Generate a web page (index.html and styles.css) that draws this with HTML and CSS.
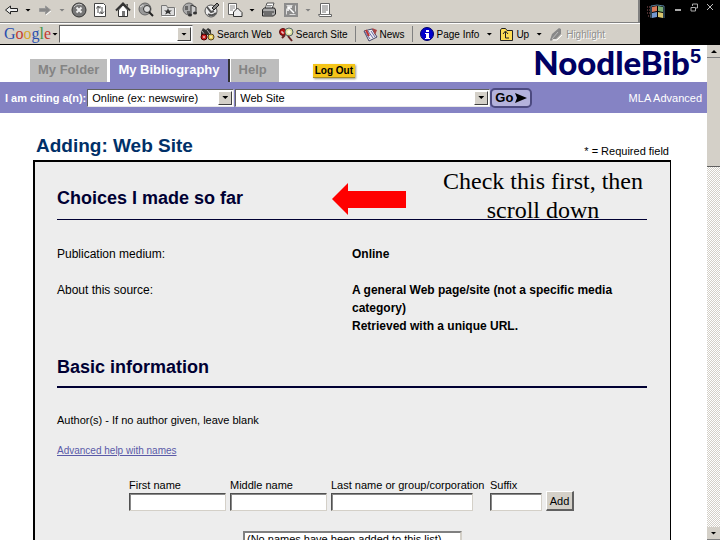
FILE: index.html
```html
<!DOCTYPE html>
<html lang="en">
<head>
    <meta charset="UTF-8">
    <meta name="viewport" content="width=device-width, initial-scale=1.0">
    <title>NoodleBib - Adding: Web Site</title>
    <link rel="stylesheet" href="styles.css">
</head>
<body>

<!-- Browser toolbars -->
<div class="browser">
    <div class="bars">
        <div class="toolbar">
            <button class="tool" aria-label="Back"><svg width="16" height="16" viewBox="0 0 16 16"><path d="M2.500 8l5-4v2.500h7v3h-7V12z" fill="#eee" stroke="#222"/></svg></button>
            <button class="caret" aria-label="Back history"></button>
            <button class="tool" aria-label="Forward"><svg width="16" height="16" viewBox="0 0 16 16"><path d="M13.500 8l-5-4v2.500h-6v3h6V12z" fill="#888" stroke="#999"/><path d="M9 13l5-4" stroke="#fff"/></svg></button>
            <button class="caret light" aria-label="Forward history"></button>
            <button class="tool" aria-label="Stop"><svg width="16" height="16" viewBox="0 0 16 16"><circle cx="8" cy="8" r="7" fill="#777" stroke="#333"/><path d="M3 5a6 6 0 0 1 8-2" stroke="#ccc" fill="none"/><path d="M5.500 5.500l5 5M10.500 5.500l-5 5" stroke="#eee" stroke-width="2"/></svg></button>
            <button class="tool" aria-label="Refresh"><svg width="16" height="16" viewBox="0 0 16 16"><path d="M1.500 1.500h9l2 2v11h-11z" fill="#fff" stroke="#444"/><path d="M5 11V5h3M3.500 6.500L5 4l2 2.500M9 5v6H6M7.500 9.500L9 12l2-2.500" fill="none" stroke="#555"/></svg></button>
            <button class="tool" aria-label="Home"><svg width="16" height="16" viewBox="0 0 16 16"><path d="M3.500 8v6.500h9V8L8 3z" fill="#fff" stroke="#333"/><path d="M1 8.500L8 1.500l7 7" fill="none" stroke="#333" stroke-width="2"/><path d="M11 2h2v4z" fill="#555"/><path d="M7 9h3v5H7z" fill="#777"/></svg></button>
            <span class="sep"></span>
            <button class="tool" aria-label="Search"><svg width="16" height="16" viewBox="0 0 16 16"><circle cx="7" cy="7" r="6" fill="#999" stroke="#666"/><path d="M2 5q3-3 5 0t5 0" stroke="#ddd" fill="none"/><circle cx="9" cy="7" r="3.500" fill="#ddd" stroke="#333"/><path d="M11 10l4 4" stroke="#222" stroke-width="2"/></svg></button>
            <button class="tool" aria-label="Favorites"><svg width="16" height="16" viewBox="0 0 16 16"><path d="M1.500 13.500v-10h5l1 2h7v8z" fill="#ddd" stroke="#777"/><path d="M8 6l1 2.500h3L9.800 10l1 2.500L8 11l-2.800 1.500 1-2.500L4 8.500h3z" fill="#333"/><path d="M2 14.500h13.500V6" fill="none" stroke="#fff"/></svg></button>
            <button class="tool" aria-label="Media"><svg width="16" height="16" viewBox="0 0 16 16"><circle cx="7" cy="7" r="6" fill="#aaa" stroke="#666"/><path d="M3 4h3v4H3zM5 9h3v3H5z" fill="#666"/><path d="M9 13V3l5 2v6" fill="#ccc" stroke="#333"/><ellipse cx="8" cy="13" rx="2" ry="1.500" fill="#333"/><ellipse cx="13" cy="11" rx="2" ry="1.500" fill="#333"/></svg></button>
            <button class="tool" aria-label="History"><svg width="16" height="16" viewBox="0 0 16 16"><circle cx="7" cy="9" r="6" fill="#eee" stroke="#555"/><path d="M3 5l4 5 3-1M4 12q4 3 8-1" fill="none" stroke="#555" stroke-width="2"/><path d="M8 6l5-5 2 2-5 5z" fill="#888" stroke="#222"/></svg></button>
            <span class="sep"></span>
            <button class="tool" aria-label="Edit"><svg width="16" height="16" viewBox="0 0 16 16"><path d="M1.500 1.500h8v11h-8z" fill="#fff" stroke="#666"/><path d="M3 4h5M3 6h5M3 8h3" stroke="#888"/><path d="M6.500 10l4-4 4.500 4.500v4H6.500z" fill="#eee" stroke="#333"/></svg></button>
            <button class="caret" aria-label="Edit options"></button>
            <button class="tool" aria-label="Print"><svg width="16" height="16" viewBox="0 0 16 16"><path d="M4 7l2-6h7l-2 6z" fill="#fff" stroke="#555"/><path d="M1.500 7.500l2-1.500h10l1 2v4l-2 2h-11z" fill="#aaa" stroke="#222"/><path d="M2 10h11M3 12h8" stroke="#333"/><path d="M6 3.500h5M6 5h4" stroke="#888"/></svg></button>
            <button class="tool" aria-label="Full screen"><svg width="16" height="16" viewBox="0 0 16 16"><path d="M1 1h14v14H1z" fill="#8c8c8c"/><path d="M3.500 12.500v-9h9v9z" fill="none" stroke="#ddd" stroke-dasharray="6 3"/><path d="M5 9V5h4M5 5l6 6" fill="none" stroke="#fff" stroke-width="1.500"/></svg></button>
            <button class="caret light" aria-label="Screen options"></button>
            <button class="tool" aria-label="Discuss"><svg width="16" height="16" viewBox="0 0 16 16"><path d="M3.500 1.500h9v11h2v2h-12l-1-2h2z" fill="#fff" stroke="#666"/><path d="M5 4h6M5 6h6M5 8h6M5 10h4M4 12.500h9" stroke="#777"/></svg></button>
        </div>
        <div class="google-bar">
            <span class="google"><span class="g-blue">G</span><span class="g-red">o</span><span class="g-yellow">o</span><span class="g-blue">g</span><span class="g-green">l</span><span class="g-red">e</span></span>
            <button class="caret" aria-label="Google menu"></button>
            <div class="combo search-box">
                <input type="text" aria-label="Search terms">
                <button class="drop" aria-label="Recent searches"></button>
            </div>
            <button class="bar-item"><svg width="15" height="15" viewBox="0 0 15 15"><path d="M1 5l2-4 3 2 2-2 3 2v5H1z" fill="#333"/><path d="M2 4l3 4M7 3l3 4" stroke="#bbb"/><circle cx="4" cy="10" r="3" fill="#c22" stroke="#400"/><circle cx="11" cy="10" r="3" fill="#e8ce58" stroke="#542"/><path d="M3 10h2M10 10h2" stroke="#fff"/></svg>Search Web</button>
            <button class="bar-item"><svg width="15" height="15" viewBox="0 0 15 15"><circle cx="4" cy="5" r="3.500" fill="#b11" stroke="#511"/><circle cx="10" cy="5" r="4" fill="#dfe0a0" stroke="#566"/><path d="M3 4v2h2M8 5h4M10 3v4" stroke="#fff" fill="none"/><path d="M6 8l-3 3M9 9l4 5" stroke="#622" stroke-width="2"/></svg>Search Site</button>
            <span class="sep"></span>
            <button class="bar-item"><svg width="15" height="15" viewBox="0 0 15 15"><path d="M1 4l8-2 5 8-8 4z" fill="#eee" stroke="#446"/><path d="M2 5l5 7M5 4l5 7M8 4l4 6" stroke="#66a"/><path d="M9 1l5 2-2 5z" fill="#a44"/><path d="M3 3l3 6" stroke="#b33" stroke-width="2"/></svg>News</button>
            <span class="sep"></span>
            <button class="bar-item"><svg width="15" height="15" viewBox="0 0 15 15"><circle cx="7" cy="7" r="6.500" fill="#00c" stroke="#006"/><path d="M6 3h3v2H6zM5 6h4v5h1v1H5v-1h1V7H5z" fill="#fff"/></svg>Page Info</button>
            <button class="caret" aria-label="Page info options"></button>
            <button class="bar-item"><svg width="15" height="15" viewBox="0 0 15 15"><path d="M1.500 13.500V3l1-1.500h4L8 3.500h5.500v10z" fill="#fd5" stroke="#222"/><path d="M4 7l2.500-3L9 7M6.500 5v6H10" fill="none" stroke="#222"/></svg>Up</button>
            <button class="caret" aria-label="Up options"></button>
            <button class="bar-item off"><svg width="15" height="15" viewBox="0 0 15 15"><path d="M1 13l2-6 7-6 2 1v5l-5 5H4l-2 2z" fill="#888"/><path d="M3 12l6-7" stroke="#bbb"/><path d="M4 13h4l5-5" stroke="#fff" fill="none"/></svg>Highlight</button>
        </div>
    </div>
    <div class="window-corner">
        <svg class="flag" width="20" height="18" viewBox="0 0 20 18"><path d="M6 4l5-1v5L6 9z" fill="#d97856"/><path d="M12 3l5 1v5l-5-1z" fill="#7cae72"/><path d="M6 10l5-1v5l-5 1z" fill="#7398d0"/><path d="M12 9l5 1v5l-5-1z" fill="#d8c46e"/><path d="M1 4h4M1 7h4M1 10h4M2 13h3" stroke="#935a5a" stroke-dasharray="1 1"/><path d="M5 15V3l6-1 7 1v12" fill="none" stroke="#577f99"/></svg>
        <button aria-label="Minimize"><svg width="8" height="9" viewBox="0 0 8 9"><path d="M1 7h6" stroke="#aaa" stroke-width="2"/></svg></button>
        <button aria-label="Restore"><svg width="8" height="9" viewBox="0 0 8 9"><path d="M2.500 3V1h5v4H6M1 4.500h4.500v3.500H1z" fill="none" stroke="#aaa"/></svg></button>
        <button aria-label="Close"><svg width="8" height="9" viewBox="0 0 8 9"><path d="M1 1l6 6M7 1L1 7" stroke="#bbb"/></svg></button>
    </div>
</div>

<div class="viewport">
    <main class="page">
        <!-- Tabs and logo -->
        <header class="header">
            <nav class="tabs">
                <a href="#" class="tab">My Folder</a>
                <a href="#" class="tab active">My Bibliography</a>
                <a href="#" class="tab">Help</a>
            </nav>
            <button class="logout">Log Out</button>
            <div class="logo">NoodleBib<span class="version">5</span></div>
        </header>

        <!-- Citation type -->
        <form class="cite-bar">
            <label for="medium">I am citing a(n):</label>
            <div class="combo medium">
                <select id="medium"><option>Online (ex: newswire)</option></select>
                <span class="drop"></span>
            </div>
            <div class="combo source">
                <select id="source" aria-label="Source type"><option>Web Site</option></select>
                <span class="drop"></span>
            </div>
            <button type="button" class="go">Go<svg width="12" height="10" viewBox="0 0 12 10"><path d="M0 0l12 5-12 5 2-5z" fill="#000"/></svg></button>
            <a href="#" class="style-link">MLA Advanced</a>
        </form>

        <div class="title-row">
            <h1>Adding: Web Site</h1>
            <span>* = Required field</span>
        </div>

        <section class="panel">
            <h2>Choices I made so far</h2>
            <dl class="choices">
                <dt>Publication medium:</dt>
                <dd>Online</dd>
                <dt>About this source:</dt>
                <dd>A general Web page/site (not a specific media category)<br>Retrieved with a unique URL.</dd>
            </dl>

            <h2 class="thick">Basic information</h2>
            <p>Author(s) - If no author given, leave blank</p>
            <p><a href="#" class="help">Advanced help with names</a></p>

            <form class="names">
                <div class="field"><label for="first">First name</label><input type="text" id="first"></div>
                <div class="field"><label for="middle">Middle name</label><input type="text" id="middle"></div>
                <div class="field last"><label for="last">Last name or group/corporation</label><input type="text" id="last"></div>
                <div class="field suffix"><label for="suffix">Suffix</label><input type="text" id="suffix"></div>
                <button type="button" class="add">Add</button>
            </form>
            <select class="name-list" size="4" aria-label="Names">
                <option>(No names have been added to this list)</option>
            </select>

            <!-- Note over the form -->
            <div class="note">
                <svg width="74" height="32" viewBox="0 0 74 32"><path d="M0 16L16 0v8h58v17H16v7z" fill="#f00"/></svg>
                <p>Check this first, then scroll down</p>
            </div>
        </section>
    </main>

    <div class="scrollbar">
        <button class="scroll-up" aria-label="Scroll up"></button>
        <div class="thumb"></div>
        <button class="scroll-down" aria-label="Scroll down"></button>
    </div>
</div>

</body>
</html>
```
FILE: styles.css
```css
* {
    box-sizing: border-box;
}

body {
    font-family: "Liberation Sans", Arial, sans-serif;
    font-size: 11px;
    margin: 0;
    height: 100vh;
    display: flex;
    flex-direction: column;
    overflow: hidden;
    background-color: #fff;
    color: #000;
}

button, input, select {
    font-family: inherit;
    font-size: inherit;
    color: inherit;
    margin: 0;
    padding: 0;
    border: none;
    border-radius: 0;
    background: none;
}

svg {
    display: block;
    flex: none;
}

/* Browser toolbars */
.browser {
    display: flex;
    flex: none;
}

.bars {
    flex: 1;
    background-color: #d4d0c8;
    border-bottom: 1px solid #000;
}

.toolbar {
    display: flex;
    align-items: center;
    gap: 6px;
    height: 23px;
    padding: 0 3px 2px;
    border-right: 2px solid #808080;
    border-bottom: 1px solid #808080;
}

.google-bar {
    display: flex;
    align-items: center;
    gap: 7px;
    height: 21px;
    padding-left: 4px;
    border-top: 1px solid #fff;
    font-size: 10px;
}

.caret {
    width: 6px;
    height: 3px;
    background-color: #000;
    clip-path: polygon(0 0, 100% 0, 50% 100%);
}

.caret.light {
    background-color: #808080;
}

.sep {
    width: 1px;
    height: 16px;
    background-color: #808080;
}

.toolbar .sep {
    margin: 0 -3px;
    background-color: #fff;
}

.google {
    width: 35px;
    white-space: nowrap;
    font-family: "Liberation Serif", serif;
    font-size: 16px;
    line-height: 18px;
}

.google + .caret {
    margin: 0 -6px 0 6px;
}

.g-blue { color: #2a4fae; }
.g-red { color: #c2392f; }
.g-yellow { color: #d8a52c; }
.g-green { color: #3f9446; }

.bar-item {
    display: flex;
    align-items: center;
    gap: 2px;
    white-space: nowrap;
}

.bar-item.off {
    color: #909090;
    text-shadow: 1px 1px #fff;
}

.window-corner {
    display: flex;
    align-items: flex-start;
    gap: 8px;
    width: 80px;
    padding: 3px 6px;
    background-color: #000;
}

/* Boxes with a drop arrow */
.combo {
    display: flex;
    height: 18px;
    padding: 1px;
    background-color: #fff;
    border: 1px solid #606060;
    border-right-color: #e8e8e8;
    border-bottom-color: #e8e8e8;
}

.combo input,
.combo select {
    flex: 1;
    min-width: 0;
    appearance: none;
    padding-left: 3px;
    outline: none;
}

.drop {
    width: 14px;
    background-color: #d4d0c8;
    border: 1px solid #fff;
    border-right-color: #404040;
    border-bottom-color: #404040;
    display: flex;
    align-items: center;
    justify-content: center;
}

.drop::after,
.scroll-up::after,
.scroll-down::after {
    content: "";
    width: 6px;
    height: 3px;
    background-color: #000;
    clip-path: polygon(0 0, 100% 0, 50% 100%);
}

.search-box {
    width: 134px;
}

/* Page */
.viewport {
    flex: 1;
    min-height: 0;
    display: flex;
}

.page {
    flex: 1;
    min-width: 0;
    overflow: hidden;
}

.header {
    display: flex;
    align-items: flex-end;
    height: 37px;
    padding-left: 30px;
}

.tabs {
    display: flex;
    gap: 3px;
}

.tab {
    height: 23px;
    padding: 0 8px;
    background-color: #bdbdbd;
    color: #848484;
    font-size: 13px;
    font-weight: bold;
    line-height: 22px;
    text-decoration: none;
}

.tab.active {
    background-color: #8583c4;
    color: #fff;
    box-shadow: 2px 0 #333;
}

.tab:last-child {
    padding-right: 12px;
}

.logout {
    margin: 0 0 4px 34px;
    height: 14px;
    padding: 0 2px;
    background-color: #f5c518;
    border-bottom: 1px solid #a88a20;
    box-shadow: 1px 1px 2px #998;
    font-size: 10px;
    font-weight: bold;
    line-height: 13px;
}

.logo {
    display: flex;
    align-items: flex-start;
    align-self: flex-start;
    margin-left: auto;
    padding-right: 6px;
    color: #000063;
    font-family: Lato, "Liberation Sans", sans-serif;
    font-size: 33px;
    font-weight: 900;
    line-height: 34px;
}

.logo .version {
    font-family: "Liberation Sans", sans-serif;
    font-size: 20px;
    font-weight: bold;
    line-height: 22px;
}

.cite-bar {
    display: flex;
    align-items: center;
    height: 31px;
    padding: 0 5px;
    background-color: #8583c4;
}

.cite-bar label {
    margin-right: 1px;
    color: #fff;
    font-weight: bold;
}

.medium {
    width: 147px;
    margin-right: 1px;
}

.source {
    width: 255px;
}

.go {
    display: flex;
    align-items: center;
    gap: 2px;
    height: 20px;
    padding: 0 3px;
    background-color: #b4b2dc;
    border: 2px solid #4c4a80;
    border-radius: 5px;
    font-size: 13px;
    font-weight: bold;
}

.style-link {
    margin-left: auto;
    color: #fff;
    text-decoration: none;
}

.title-row {
    display: flex;
    align-items: flex-end;
    justify-content: space-between;
    height: 47px;
    padding: 0 38px 3px 36px;
}

.title-row h1 {
    margin: 0;
    color: #003068;
    font-size: 19px;
    font-weight: bold;
    line-height: 22px;
}

.panel {
    position: relative;
    margin: 0 36px 0 33px;
    padding: 26px 23px 0 22px;
    height: 500px;
    background-color: #ededed;
    border: 2px solid #000;
    border-right-width: 1px;
}

.panel h2 {
    margin: 0 0 25px;
    padding-bottom: 10px;
    border-bottom: 1px solid #000033;
    color: #000033;
    font-size: 18px;
    line-height: 21px;
}

.panel h2.thick {
    margin: 22px 0 23px;
    padding-bottom: 8px;
    border-bottom-width: 2px;
}

.choices {
    display: grid;
    grid-template-columns: 1fr 1fr;
    row-gap: 18px;
    margin: 0;
    font-size: 12px;
    line-height: 18px;
}

.choices dd {
    margin: 0;
    font-weight: bold;
}

.panel p {
    margin: 0 0 12px;
    line-height: 18px;
}

.help {
    color: #5a5aa8;
    font-size: 10px;
}

/* Author name fields */
.names {
    display: flex;
    align-items: flex-end;
    gap: 4px;
    margin: 18px 0 20px 72px;
}

.field {
    display: flex;
    flex-direction: column;
    width: 97px;
    white-space: nowrap;
    line-height: 15px;
}

.field input {
    height: 18px;
    background-color: #fff;
    border: 1px solid #505050;
    border-right-color: #d4d0c8;
    border-bottom-color: #d4d0c8;
    box-shadow: inset 1px 1px #888;
}

.field.last {
    width: 155px;
}

.field.last input {
    width: 142px;
}

.field.suffix {
    width: 52px;
}

.add {
    height: 20px;
    width: 28px;
    background-color: #d4d0c8;
    border: 1px solid #fff;
    border-right: 2px solid #606060;
    border-bottom: 2px solid #606060;
}

.name-list {
    display: block;
    width: 219px;
    height: 70px;
    margin-left: 186px;
    background-color: #fff;
    border: 2px solid #808080;
    border-right-color: #d4d0c8;
    border-bottom-color: #d4d0c8;
}

.note {
    position: absolute;
    top: 5px;
    right: 16px;
    display: flex;
    align-items: center;
    gap: 26px;
}

.note svg {
    margin-top: 6px;
}

.note p {
    width: 222px;
    margin: 0;
    font-family: "Liberation Serif", serif;
    font-size: 24px;
    line-height: 29px;
    text-align: center;
}

/* Scrollbar */
.scrollbar {
    display: flex;
    flex-direction: column;
    width: 13px;
    background: repeating-conic-gradient(#d4d0c8 0% 25%, #fff 0% 50%) 0 0 / 2px 2px;
}

.scroll-up,
.scroll-down {
    display: flex;
    align-items: center;
    justify-content: center;
    height: 13px;
    background-color: #d4d0c8;
    border-bottom: 1px solid #808080;
}

.scroll-up::after {
    transform: rotate(180deg);
}

.thumb {
    height: 109px;
    background-color: #d4d0c8;
    border-bottom: 1px solid #606060;
}

.scroll-down {
    margin-top: auto;
}
```
